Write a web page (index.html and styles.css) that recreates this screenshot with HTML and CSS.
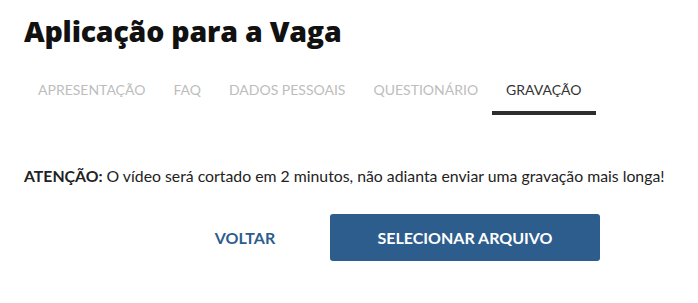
FILE: index.html
```html
<!DOCTYPE html>
<html lang="pt">
<head>
<meta charset="utf-8">
<title>Aplicação para a Vaga</title>
<link rel="stylesheet" href="styles.css">
</head>
<body>
<main class="page">
  <h1 class="title">Aplicação para a Vaga</h1>
  <nav class="tabs">
    <span class="tab">APRESENTAÇÃO</span>
    <span class="tab">FAQ</span>
    <span class="tab">DADOS PESSOAIS</span>
    <span class="tab">QUESTIONÁRIO</span>
    <span class="tab active">GRAVAÇÃO</span>
  </nav>
  <p class="notice"><strong>ATENÇÃO:</strong> O vídeo será cortado em 2 minutos, não adianta enviar uma gravação mais longa!</p>
  <div class="actions">
    <button class="btn btn-link">VOLTAR</button>
    <button class="btn btn-primary">SELECIONAR ARQUIVO</button>
  </div>
</main>
</body>
</html>
```

FILE: styles.css
```css
* { box-sizing: border-box; }
html, body { margin: 0; padding: 0; background: #fff; }
body { font-family: Lato, "Open Sans", sans-serif; color: #222; }
.page { padding: 12px 24px 0 24px; }
.title {
  margin: 0;
  font-family: "Open Sans", Lato, sans-serif;
  font-weight: 800;
  font-size: 28.5px;
  line-height: 38px;
  color: #111;
  letter-spacing: -0.2px;
}
.tabs {
  display: flex;
  margin-top: 27px;
}
.tab {
  padding: 0 14px;
  font-size: 14px;
  line-height: 20px;
  height: 38px;
  padding-top: 3px;
  color: #bdbdbd;
  border-bottom: 4px solid transparent;
}
.tab.active { color: #333; border-bottom-color: #2e2e2e; }
.notice {
  margin: 51px 0 0 0;
  font-size: 15.8px;
  line-height: 20px;
  color: #222;
}
.notice strong { font-weight: 700; }
.actions {
  display: flex;
  margin-top: 28px;
  padding-left: 136px;
}
.btn {
  font-family: Lato, sans-serif;
  font-weight: 700;
  font-size: 16px;
  border: none;
  height: 47px;
  border-radius: 3px;
  cursor: pointer;
}
.btn-link { width: 170px; background: none; color: #2d5d8c; }
.btn-primary { width: 270px; background: #2c5d8c; color: #fff; }
```
